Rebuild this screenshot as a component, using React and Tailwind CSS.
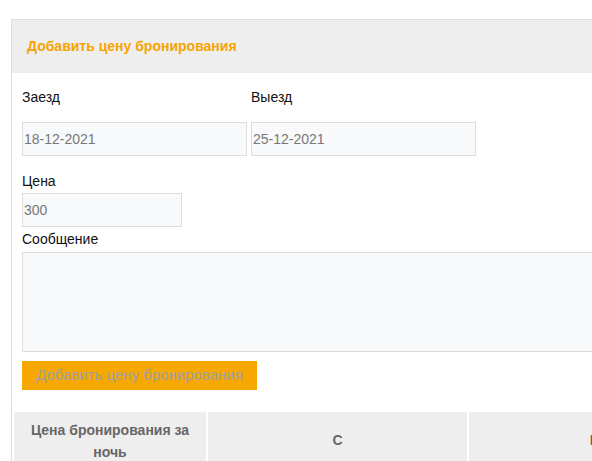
const font = { fontFamily: '"Liberation Sans", Arial, sans-serif' };

function Field({ label, value, className = '' }) {
  return (
    <div className={className}>
      <div className="text-[14px] leading-[20px] text-[#111] mb-[15px]">{label}</div>
      <input
        readOnly
        value={value}
        className="w-full h-[34px] px-[1px] border border-[#dddddd] bg-[#f8f9fa] text-[14px] text-[#777] outline-none"
      />
    </div>
  );
}

export default function App() {
  return (
    <div className="w-[592px] h-[461px] overflow-hidden bg-white" style={font}>
      <div className="ml-[11px] mt-[19px] w-[900px] border border-[#dddddd] border-b-0">
        {/* Header */}
        <div className="h-[53px] bg-[#eeeeee] px-[15px] flex items-center">
          <span className="text-[14px] font-bold text-[#f5a400]">Добавить цену бронирования</span>
        </div>

        {/* Form */}
        <div className="pl-[10px] pt-[14px]">
          <div className="flex gap-[4px]">
            <Field label="Заезд" value="18-12-2021" className="w-[225px]" />
            <Field label="Выезд" value="25-12-2021" className="w-[225px]" />
          </div>

          <div className="mt-[15px] text-[14px] leading-[20px] text-[#111] mb-[2px]">Цена</div>
          <input
            readOnly
            value="300"
            className="w-[160px] h-[34px] px-[1px] border border-[#dddddd] bg-[#f8f9fa] text-[14px] text-[#777] outline-none block"
          />

          <div className="mt-[2px] text-[14px] leading-[20px] text-[#111] mb-[3px]">Сообщение</div>
          <textarea
            readOnly
            className="block w-[700px] h-[100px] border border-[#dddddd] bg-[#f8f9fa] resize-none outline-none"
          />

          <button className="mt-[9px] h-[29px] w-[235px] bg-[#f7a800] text-[15px] text-[#a0a0a0] flex items-center justify-center">
            Добавить цену бронирования
          </button>
        </div>

        {/* Table head */}
        <div className="mt-[22px] ml-[2px] flex gap-[2px] text-[14px] font-bold text-[#666] leading-[22px] text-center">
          <div className="w-[192px] bg-[#eeeeee] pt-[7px] pb-[4px] px-[10px]">Цена бронирования за ночь</div>
          <div className="w-[259px] bg-[#eeeeee] flex items-center justify-center">С</div>
          <div className="w-[260px] bg-[#eeeeee] flex items-center justify-center">По</div>
        </div>
      </div>
    </div>
  );
}
